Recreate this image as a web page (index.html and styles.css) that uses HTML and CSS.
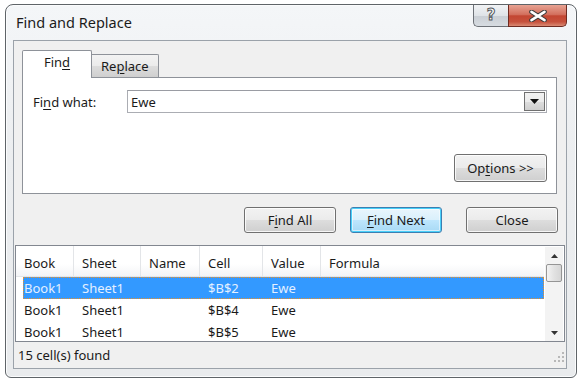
FILE: index.html
```html
<!DOCTYPE html>
<html>
<head>
<meta charset="utf-8">
<link rel="stylesheet" href="styles.css">
</head>
<body>
<div class="window">
  <div class="titlebar">
    <div class="title">Find and Replace</div>
    <div class="caption-buttons">
      <div class="cap help"><span>?</span></div>
      <div class="cap close">
        <svg width="18" height="12" viewBox="0 0 18 12"><path d="M2.5 1.8 L15.5 10.2 M15.5 1.8 L2.5 10.2" stroke="#3b3b3b" stroke-width="4.6" stroke-linecap="round"/><path d="M2.5 1.8 L15.5 10.2 M15.5 1.8 L2.5 10.2" stroke="#ffffff" stroke-width="2.6" stroke-linecap="round"/></svg>
      </div>
    </div>
  </div>
  <div class="client">
    <div class="tabs">
      <div class="tab active">Fin<u>d</u></div>
      <div class="tab">Re<u>p</u>lace</div>
    </div>
    <div class="panel">
      <div class="field-row">
        <div class="label">Fi<u>n</u>d what:</div>
        <div class="combo">
          <div class="combo-text">Ewe</div>
          <div class="combo-btn"><svg width="9" height="5" viewBox="0 0 9 5"><path d="M0 0 H9 L4.5 5 Z" fill="#111"/></svg></div>
        </div>
      </div>
      <div class="options-row">
        <div class="btn options">Op<u>t</u>ions &gt;&gt;</div>
      </div>
    </div>
    <div class="actions">
      <div class="btn">F<u>i</u>nd All</div>
      <div class="btn default"><u>F</u>ind Next</div>
      <div class="btn">Close</div>
    </div>
    <div class="list">
      <div class="list-main">
        <div class="header">
          <div class="col c1">Book</div>
          <div class="col c2">Sheet</div>
          <div class="col c3">Name</div>
          <div class="col c4">Cell</div>
          <div class="col c5">Value</div>
          <div class="col c6">Formula</div>
        </div>
        <div class="row selected">
          <div class="col c1">Book1</div>
          <div class="col c2">Sheet1</div>
          <div class="col c3"></div>
          <div class="col c4">$B$2</div>
          <div class="col c5">Ewe</div>
          <div class="col c6"></div>
        </div>
        <div class="row">
          <div class="col c1">Book1</div>
          <div class="col c2">Sheet1</div>
          <div class="col c3"></div>
          <div class="col c4">$B$4</div>
          <div class="col c5">Ewe</div>
          <div class="col c6"></div>
        </div>
        <div class="row">
          <div class="col c1">Book1</div>
          <div class="col c2">Sheet1</div>
          <div class="col c3"></div>
          <div class="col c4">$B$5</div>
          <div class="col c5">Ewe</div>
          <div class="col c6"></div>
        </div>
      </div>
      <div class="scrollbar">
        <div class="arrow up"><svg width="7" height="4" viewBox="0 0 7 4"><path d="M0 4 H7 L3.5 0 Z" fill="#333"/></svg></div>
        <div class="thumb"></div>
        <div class="track"></div>
        <div class="arrow down"><svg width="7" height="4" viewBox="0 0 7 4"><path d="M0 0 H7 L3.5 4 Z" fill="#333"/></svg></div>
      </div>
    </div>
    <div class="status">
      <div class="status-text">15 cell(s) found</div>
      <div class="grip">
        <svg width="10" height="10" viewBox="0 0 10 10" fill="#b8b8b8"><rect x="8" y="0" width="2" height="2"/><rect x="4" y="4" width="2" height="2"/><rect x="8" y="4" width="2" height="2"/><rect x="0" y="8" width="2" height="2"/><rect x="4" y="8" width="2" height="2"/><rect x="8" y="8" width="2" height="2"/></svg>
      </div>
    </div>
  </div>
</div>
</body>
</html>
```

FILE: styles.css
```css
* { box-sizing: border-box; }
html, body { margin: 0; padding: 0; background: #ffffff; }
body {
  width: 585px;
  height: 384px;
  overflow: hidden;
  font-family: "Noto Sans", "Open Sans", sans-serif;
  font-size: 13px;
  color: #1a1a1a;
}
u { text-decoration: underline; text-underline-offset: 2px; }

.window {
  margin: 4px 0 0 5px;
  width: 572px;
  height: 374px;
  border: 1px solid #5f6468;
  border-radius: 8px 8px 6px 6px;
  background: linear-gradient(180deg, #f4f6f8 0%, #eceef0 40%, #e9ebed 100%);
  box-shadow: inset 0 0 0 1px #fbfcfd;
  display: flex;
  flex-direction: column;
}

.titlebar {
  height: 35px;
  display: flex;
  justify-content: space-between;
  align-items: flex-start;
  padding-left: 10px;
  padding-right: 9px;
}
.title {
  font-size: 14.5px;
  color: #1b1b1b;
  padding-top: 7px;
}
.caption-buttons { display: flex; }
.cap {
  height: 22px;
  border: 1px solid #6d7177;
  border-top: none;
  display: flex;
  align-items: center;
  justify-content: center;
}
.help {
  width: 35px;
  border-right: none;
  border-radius: 0 0 0 5px;
  background: linear-gradient(180deg, #f1f3f5 0%, #dfe3e7 50%, #c9ced4 51%, #d7dce1 100%);
}
.help span {
  font-family: "DejaVu Sans", sans-serif;
  font-weight: bold;
  font-size: 15px;
  color: #fdfdfd;
  -webkit-text-stroke: 1px #55595e;
  line-height: 1;
}
.close {
  width: 59px;
  border-radius: 0 0 5px 0;
  border-color: #6e2a20;
  background: linear-gradient(180deg, #e8a393 0%, #d3705e 45%, #c34632 52%, #c6513c 80%, #d98a73 100%);
}

.client {
  margin: 0 9px 8px 7px;
  flex: 1;
  border: 1px solid #9ba2aa;
  background: #f0f0f0;
  display: flex;
  flex-direction: column;
}

.tabs {
  display: flex;
  align-items: flex-end;
  padding: 8px 0 0 8px;
  height: 36px;
  position: relative;
  z-index: 1;
}
.tab {
  height: 23px;
  padding: 0 9px;
  border: 1px solid #8e9299;
  border-bottom: none;
  border-left: none;
  border-radius: 0 2px 0 0;
  background: linear-gradient(180deg, #f3f3f3 0%, #ebebeb 50%, #dddddd 51%, #cfcfcf 100%);
  display: flex;
  align-items: center;
  line-height: 1;
}
.tab.active {
  height: 28px;
  width: 70px;
  justify-content: center;
  border-left: 1px solid #8e9299;
  border-radius: 2px 2px 0 0;
  background: #ffffff;
  margin-bottom: -1px;
  padding-bottom: 4px;
}

.panel {
  margin: 0 9px 0 8px;
  height: 117px;
  border: 1px solid #8e9299;
  background: #ffffff;
  display: flex;
  flex-direction: column;
  padding: 12px 9px 0 10px;
}
.field-row {
  display: flex;
  align-items: center;
  height: 23px;
}
.label { width: 94px; }
.combo {
  flex: 1;
  height: 23px;
  border: 1px solid #abadb3;
  border-top-color: #9a9ca3;
  display: flex;
  align-items: stretch;
  background: #fff;
}
.combo-text { flex: 1; padding: 2px 3px 0; }
.combo-btn {
  width: 21px;
  margin: 1px;
  border: 1px solid #707070;
  background: linear-gradient(180deg, #f2f2f2 0%, #ebebeb 50%, #dddddd 51%, #cfcfcf 100%);
  display: flex;
  align-items: center;
  justify-content: center;
}
.options-row {
  display: flex;
  justify-content: flex-end;
  margin-top: 41px;
}

.btn {
  height: 26px;
  border: 1px solid #707070;
  border-radius: 3px;
  background: linear-gradient(180deg, #f2f2f2 0%, #ebebeb 50%, #dddddd 51%, #cfcfcf 100%);
  box-shadow: inset 0 0 0 1px rgba(255,255,255,0.8);
  display: flex;
  align-items: center;
  justify-content: center;
  width: 92px;
  line-height: 1;
}
.btn.options { width: 93px; height: 28px; }
.btn.default {
  border-color: #3c7fb1;
  box-shadow: inset 0 0 0 1px #48d0fa, inset 0 0 0 2px rgba(255,255,255,0.5);
  background: linear-gradient(180deg, #eaf6fd 0%, #d9f0fc 50%, #bee6fd 51%, #a7d9f5 100%);
}

.actions {
  display: flex;
  justify-content: flex-end;
  gap: 14px;
  margin-top: 13px;
  padding-right: 8px;
}
.actions .btn:nth-child(2) { margin-right: 10px; }

.list {
  margin: 12px 1px 0 1px;
  height: 97px;
  border: 1px solid #828790;
  background: #ffffff;
  display: flex;
}
.list-main { flex: 1; padding-right: 1px; }
.header, .row { display: flex; }
.header {
  height: 31px;
  background: linear-gradient(180deg, #ffffff 0%, #ffffff 60%, #f3f4f6 100%);
  border-bottom: 1px solid #e3e5e8;
}
.header .col {
  border-right: 1px solid #e3e5e8;
  display: flex;
  align-items: center;
  padding-left: 8px;
  padding-top: 3px;
}
.header .c6 { border-right: none; }
.col { flex: none; white-space: nowrap; }
.c1 { width: 58px; }
.c2 { width: 67px; }
.c3 { width: 59px; }
.c4 { width: 63px; }
.c5 { width: 58px; }
.c6 { flex: 1; }
.row {
  height: 22px;
  align-items: center;
}
.row .col { padding-left: 8px; }
.row.selected {
  background: #3399ff;
  color: #e4f0ff;
  outline: 1px dotted #e8902a;
  outline-offset: -1px;
  margin: 0 0 0 7px;
}
.row.selected .c1 { width: 51px; padding-left: 1px; }

.scrollbar {
  width: 18px;
  margin: 1px 1px 0 0;
  display: flex;
  flex-direction: column;
  background: #f3f3f3;
}
.arrow { height: 17px; display: flex; align-items: center; justify-content: center; }
.thumb {
  height: 18px;
  margin: 0 1px;
  border: 1px solid #959595;
  border-radius: 2px;
  background: linear-gradient(90deg, #f3f3f3, #e2e2e2 50%, #d6d6d6);
}
.track { flex: 1; }

.status {
  flex: 1;
  display: flex;
  justify-content: space-between;
  align-items: flex-end;
  padding: 0 2px 2px 4px;
}
.status-text { align-self: center; padding-top: 2px; }
```
